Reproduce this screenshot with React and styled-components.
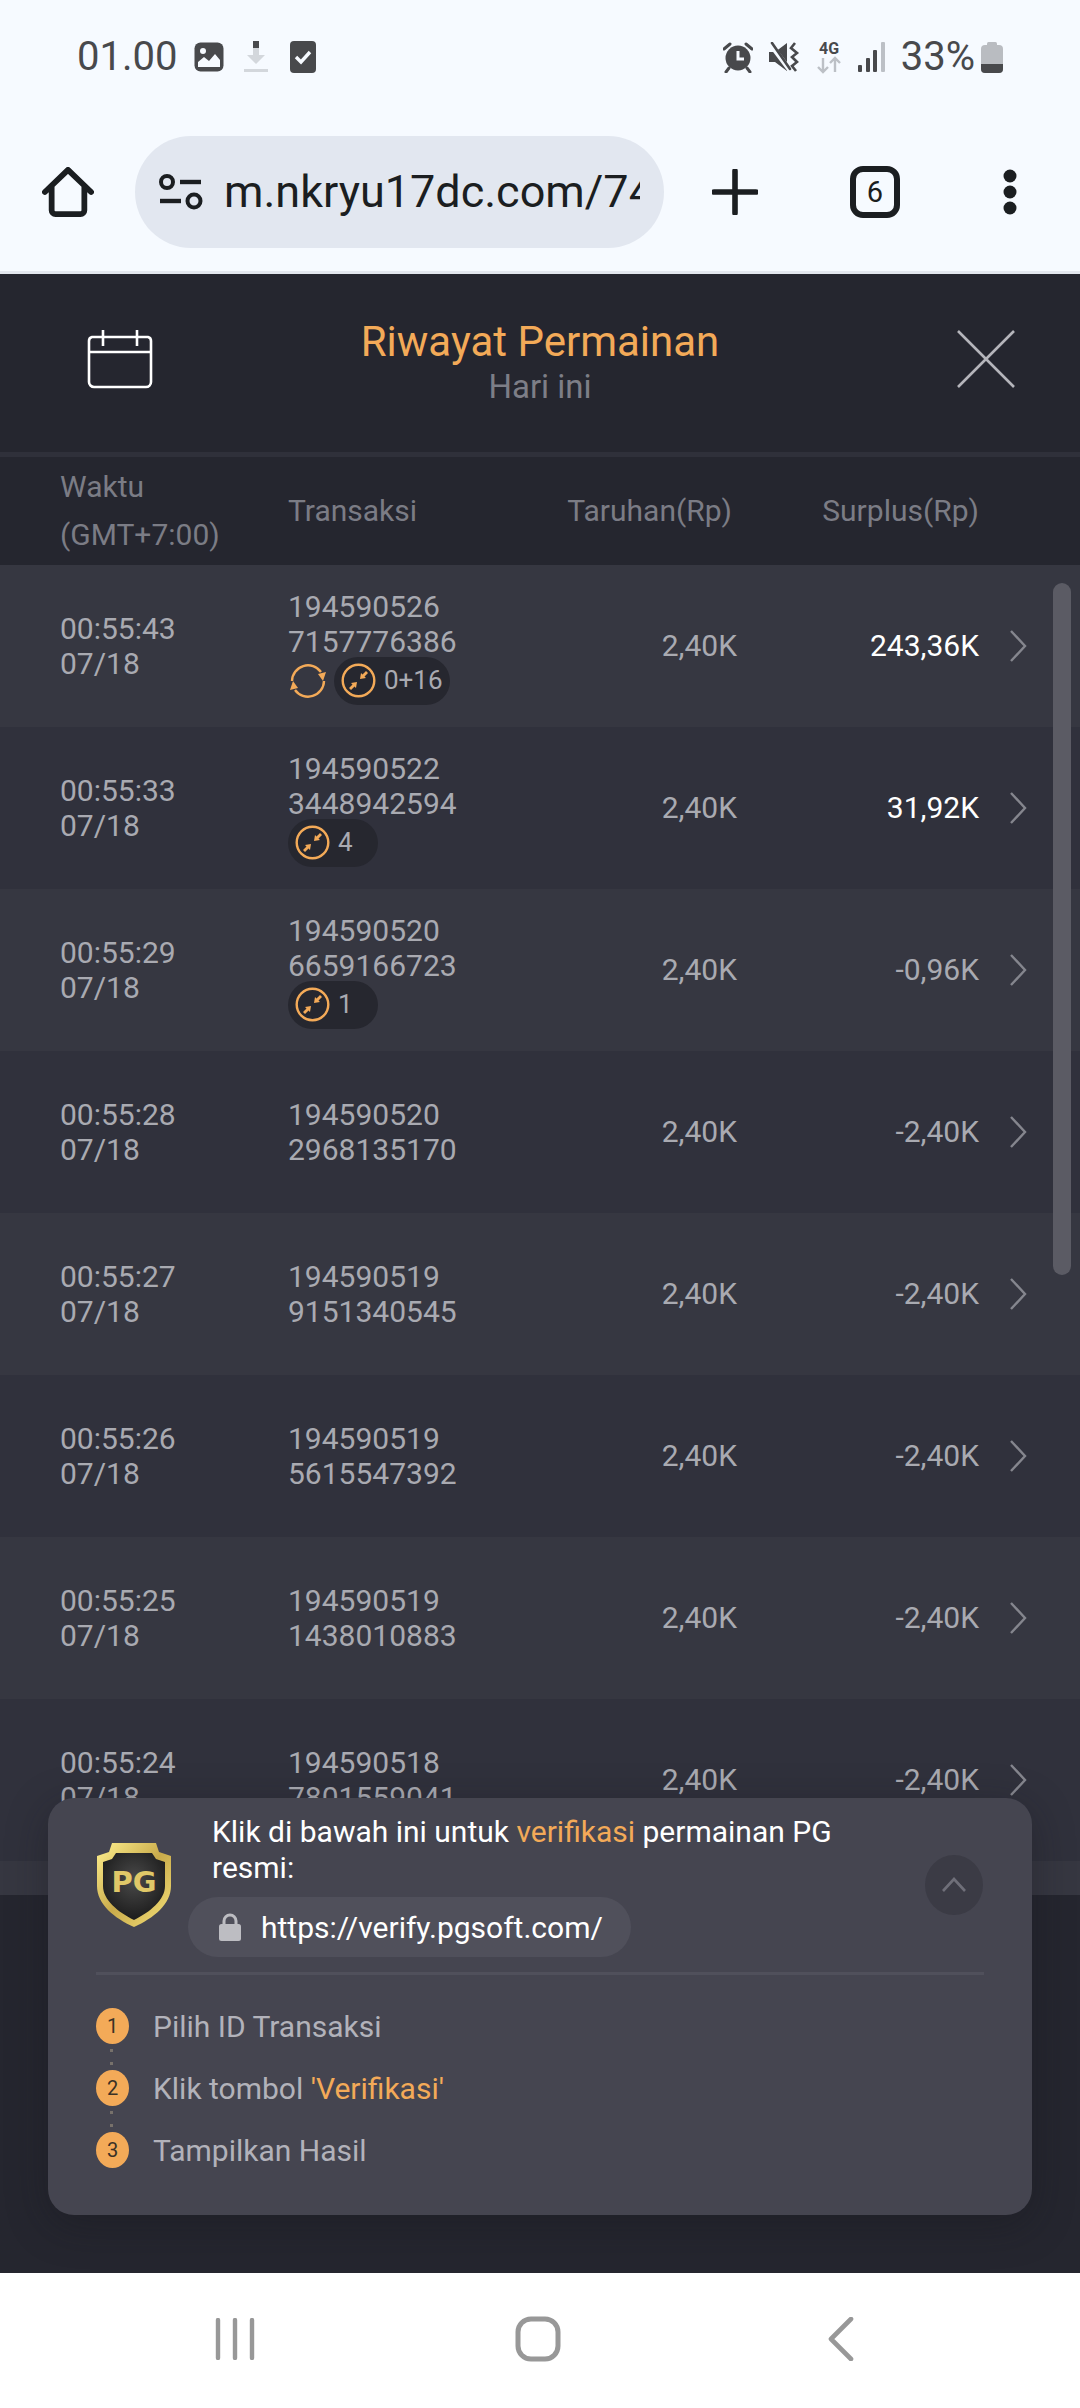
import React from 'react';
import styled, { createGlobalStyle } from 'styled-components';

const GlobalStyle = createGlobalStyle`
  html, body {
    margin: 0;
    padding: 0;
    background: #f6faff;
  }
  body {
    font-family: Roboto, "Noto Sans", sans-serif;
  }
  * {
    box-sizing: border-box;
  }
`;

const Phone = styled.div`
  width: 1080px;
  height: 2408px;
  display: flex;
  flex-direction: column;
  overflow: hidden;
`;

const StatusBar = styled.div`
  height: 112px;
  flex: none;
  background: #f6faff;
  padding: 2px 77px 0 77px;
  display: flex;
  align-items: center;
  justify-content: space-between;
  color: #48494c;
`;

const StatusGroup = styled.div`
  display: flex;
  align-items: center;
  gap: ${props => props.gap || 0}px;
`;

const StatusText = styled.span`
  font-size: 40px;
  line-height: 40px;
`;

const BrowserBar = styled.div`
  height: 162px;
  flex: none;
  background: #f6faff;
  border-bottom: 3px solid #e3e7ee;
  display: flex;
  align-items: center;
  padding: 0 0 0 42px;
  color: #1b1e21;
`;

const UrlPill = styled.div`
  width: 529px;
  height: 112px;
  margin-left: 41px;
  padding: 0 24px 0 24px;
  background: #e2e7f0;
  border-radius: 56px;
  display: flex;
  align-items: center;
  gap: 21px;
`;

const UrlText = styled.div`
  font-size: 45px;
  line-height: 60px;
  white-space: nowrap;
  overflow: hidden;
  flex: 1;
`;

const TabCount = styled.div`
  width: 50px;
  height: 52px;
  margin-left: 92px;
  border: 6px solid #1b1e21;
  border-radius: 13px;
  font-size: 29px;
  display: flex;
  align-items: center;
  justify-content: center;
`;

const BarAction = styled.div`
  margin-left: ${props => props.left}px;
  display: flex;
`;

const Panel = styled.div`
  flex: 1;
  min-height: 0;
  position: relative;
  overflow: hidden;
  background: #25262f;
`;

const PanelHeader = styled.div`
  height: 183px;
  border-bottom: 5px solid #2f303a;
  display: grid;
  grid-template-columns: 1fr auto 1fr;
  align-items: center;
  padding: 0 65px 8px 65px;
`;

const HeaderSide = styled.div`
  display: flex;
  justify-content: ${props => (props.end ? 'flex-end' : 'flex-start')};
  padding-left: ${props => (props.end ? 0 : 22)}px;
`;

const HeaderTitle = styled.div`
  text-align: center;
  padding-top: 5px;
`;

const Title = styled.div`
  color: #f3aa58;
  font-size: 42px;
  line-height: 50px;
`;

const Subtitle = styled.div`
  color: #7d7e87;
  font-size: 33px;
  line-height: 40px;
`;

const TableHead = styled.div`
  height: 108px;
  display: grid;
  align-items: center;
  color: #7b7c85;
  font-size: 30px;
  line-height: 48px;
  padding-left: 60px;
  grid-template-columns: 228px 264px 180px 247px 1fr;
`;

const HeadRight = styled.div`
  text-align: right;
`;

const Row = styled.div`
  height: 162px;
  display: grid;
  grid-template-columns: 228px 264px 185px 242px 1fr;
  align-items: center;
  padding-left: 60px;
  background: ${props => (props.odd ? '#363741' : '#30313c')};
  color: #a9aab1;
  font-size: 30px;
  line-height: 35.5px;
`;

const Surplus = styled.div`
  text-align: right;
  color: ${props => (props.win ? '#ffffff' : '#a9aab1')};
`;

const Chevron = styled.div`
  padding-left: 30px;
  display: flex;
`;

const Tags = styled.div`
  display: flex;
  align-items: center;
  gap: 6px;
  height: 46px;
  margin-top: -2px;
`;

const Spin = styled.div`
  width: 40px;
  display: flex;
  justify-content: center;
`;

const Tag = styled.div`
  height: 48px;
  min-width: 90px;
  padding: 0 7px 0 7px;
  border-radius: 24px;
  background: #26272f;
  display: flex;
  align-items: center;
  gap: 8px;
  font-size: 26px;
`;

const Footer = styled.div`
  height: 34px;
  background: #363741;
`;

const ScrollThumb = styled.div`
  position: absolute;
  top: 309px;
  right: 9px;
  width: 18px;
  height: 692px;
  border-radius: 9px;
  background: #5b5b64;
`;

const VerifyCard = styled.div`
  position: absolute;
  left: 48px;
  top: 1524px;
  width: 984px;
  height: 417px;
  padding: 16px 48px 0;
  border-radius: 26px;
  background: #454550;
  box-shadow: 0 10px 40px rgba(20, 20, 26, 0.35);
`;

const CardTop = styled.div`
  display: grid;
  grid-template-columns: 76px 1fr 58px;
  align-items: start;
  height: 158px;
`;

const CardLogo = styled.div`
  margin-top: 28px;
  display: flex;
`;

const CardBody = styled.div`
  padding-left: 40px;
`;

const CardText = styled.div`
  color: #ffffff;
  font-size: 30px;
  line-height: 36px;
  width: 660px;
`;

const Highlight = styled.span`
  color: #f3aa58;
`;

const VerifyLink = styled.div`
  width: 443px;
  height: 60px;
  margin: 11px 0 0 -24px;
  padding-left: 31px;
  border-radius: 30px;
  background: #50505b;
  display: flex;
  align-items: center;
  gap: 20px;
  color: #ffffff;
  font-size: 30px;
`;

const CollapseButton = styled.div`
  width: 58px;
  height: 60px;
  margin: 41px 1px 0 -1px;
  border-radius: 50%;
  background: #3b3b45;
  display: flex;
  align-items: center;
  justify-content: center;
`;

const CardDivider = styled.div`
  height: 3px;
  background: #50505b;
`;

const Steps = styled.div`
  margin-top: 33px;
  display: flex;
  flex-direction: column;
  gap: 26px;
`;

const Step = styled.div`
  display: flex;
  align-items: center;
  gap: 24px;
  height: 36px;
  color: #b2b2ba;
  font-size: 30px;
  position: relative;
`;

const StepNumber = styled.div`
  width: 33px;
  height: 36px;
  border-radius: 50%;
  background: #f3aa58;
  color: #3a3226;
  font-size: 20px;
  display: flex;
  align-items: center;
  justify-content: center;
`;

const StepDots = styled.div`
  position: absolute;
  left: 14px;
  top: 41px;
  width: 3px;
  height: 16px;
  border-top: 3px solid #77716b;
  border-bottom: 3px solid #77716b;
`;

const NavBar = styled.div`
  height: 135px;
  flex: none;
  background: #ffffff;
  display: flex;
  align-items: center;
  padding: 0 0 4px 215px;
`;

const NavSlot = styled.div`
  margin-left: ${props => props.left || 0}px;
  display: flex;
`;

const rows = [
  { time: '00:55:43', a: '194590526', b: '7157776386', bet: '2,40K', win: '243,36K', up: true, spin: true, tag: '0+16' },
  { time: '00:55:33', a: '194590522', b: '3448942594', bet: '2,40K', win: '31,92K', up: true, tag: '4' },
  { time: '00:55:29', a: '194590520', b: '6659166723', bet: '2,40K', win: '-0,96K', tag: '1' },
  { time: '00:55:28', a: '194590520', b: '2968135170', bet: '2,40K', win: '-2,40K' },
  { time: '00:55:27', a: '194590519', b: '9151340545', bet: '2,40K', win: '-2,40K' },
  { time: '00:55:26', a: '194590519', b: '5615547392', bet: '2,40K', win: '-2,40K' },
  { time: '00:55:25', a: '194590519', b: '1438010883', bet: '2,40K', win: '-2,40K' },
  { time: '00:55:24', a: '194590518', b: '7801559041', bet: '2,40K', win: '-2,40K' },
];

const ImageIcon = () => (
  <svg width="30" height="30" viewBox="0 0 30 30">
    <rect x="0.5" y="0.5" width="29" height="29" rx="6" fill="#48494c" />
    <circle cx="9" cy="9" r="3" fill="#f6faff" />
    <path d="M4 25 V20 L10 15 L15 19 L21 12 L26 18 V25 Z" fill="#f6faff" />
  </svg>
);

const DownloadIcon = () => (
  <svg width="24" height="32" viewBox="0 0 24 32">
    <rect x="9" y="0" width="6" height="7" fill="#48494c" />
    <path d="M9 7 H15 V14 H21 L12 23 L3 14 H9 Z" fill="#d3d7dc" />
    <rect x="0" y="28" width="24" height="3" fill="#d3d7dc" />
  </svg>
);

const CheckIcon = () => (
  <svg width="26" height="32" viewBox="0 0 26 32">
    <rect width="26" height="32" rx="4" fill="#48494c" />
    <path d="M6 16 L11 21 L20 11" fill="none" stroke="#f6faff" strokeWidth="3.4" />
  </svg>
);

const AlarmIcon = () => (
  <svg width="30" height="31" viewBox="0 0 30 31">
    <circle cx="15" cy="16" r="12.5" fill="#48494c" />
    <path d="M15 9 V17 H21" fill="none" stroke="#f6faff" strokeWidth="3" />
    <path d="M1 7 L7 2 M29 7 L23 2" stroke="#48494c" strokeWidth="3" strokeLinecap="round" />
    <path d="M6 26 L3 30 M24 26 L27 30" stroke="#48494c" strokeWidth="3" strokeLinecap="round" />
  </svg>
);

const MuteIcon = () => (
  <svg width="31" height="30" viewBox="0 0 31 30">
    <path d="M0 10 H6 L18 1 V29 L6 20 H0 Z" fill="#48494c" />
    <path d="M2 3 L20 27" stroke="#f6faff" strokeWidth="5" />
    <path d="M3 1 L21 27" stroke="#48494c" strokeWidth="2.6" strokeLinecap="round" />
    <path d="M26 1 L22 6 L28 11 L23 15 L28 20 L23 24 L27 29" fill="none" stroke="#48494c" strokeWidth="2.6" />
  </svg>
);

const NetworkIcon = () => (
  <svg width="26" height="34" viewBox="0 0 26 34">
    <text x="13" y="14" textAnchor="middle" fontFamily="Roboto, sans-serif" fontSize="16" fontWeight="700" fill="#48494c">4G</text>
    <path d="M7 18 V32 M2 27 L7 32 L12 27" fill="none" stroke="#bcc0c6" strokeWidth="2.4" />
    <path d="M19 32 V18 M14 23 L19 18 L24 23" fill="none" stroke="#bcc0c6" strokeWidth="2.4" />
  </svg>
);

const SignalIcon = () => (
  <svg width="27" height="30" viewBox="0 0 27 30">
    <rect x="0" y="23" width="4" height="7" rx="1" fill="#48494c" />
    <rect x="8" y="16" width="4" height="14" rx="1" fill="#48494c" />
    <rect x="15" y="8" width="4" height="22" rx="1" fill="#48494c" />
    <rect x="23" y="0" width="4" height="30" rx="1" fill="#bcc0c6" />
  </svg>
);

const BatteryIcon = () => (
  <svg width="22" height="31" viewBox="0 0 22 31">
    <rect x="6" y="0" width="10" height="5" rx="1.5" fill="#b9bcc1" />
    <rect x="0" y="3" width="22" height="28" rx="4" fill="#b9bcc1" />
    <path d="M0 22 H22 V27 A4 4 0 0 1 18 31 H4 A4 4 0 0 1 0 27 Z" fill="#48494c" />
  </svg>
);

const HomeIcon = () => (
  <svg width="52" height="50" viewBox="0 0 54 52">
    <path d="M3 26 L27 3 L51 26 M10 20 V45 A4 4 0 0 0 14 49 H40 A4 4 0 0 0 44 45 V20" fill="none" stroke="#1b1e21" strokeWidth="6" strokeLinecap="round" strokeLinejoin="round" />
  </svg>
);

const TuneIcon = () => (
  <svg width="44" height="36" viewBox="0 0 44 36">
    <circle cx="8" cy="8" r="6" fill="none" stroke="#1b1e21" strokeWidth="4" />
    <path d="M21 8 H42" stroke="#1b1e21" strokeWidth="4.4" />
    <path d="M1 27 H22" stroke="#1b1e21" strokeWidth="4.4" />
    <circle cx="35" cy="27" r="6.5" fill="none" stroke="#1b1e21" strokeWidth="4" />
  </svg>
);

const PlusIcon = () => (
  <svg width="46" height="46" viewBox="0 0 46 46">
    <path d="M23 2 V44 M2 23 H44" stroke="#1b1e21" strokeWidth="5.6" strokeLinecap="round" />
  </svg>
);

const MenuIcon = () => (
  <svg width="14" height="46" viewBox="0 0 14 46">
    <circle cx="7" cy="7" r="6.5" fill="#1b1e21" />
    <circle cx="7" cy="23" r="6.5" fill="#1b1e21" />
    <circle cx="7" cy="39" r="6.5" fill="#1b1e21" />
  </svg>
);

const CalendarIcon = () => (
  <svg width="66" height="60" viewBox="0 0 66 60">
    <path d="M5 8 H61 A4 4 0 0 1 64 12 V53 A5 5 0 0 1 59 58 H7 A5 5 0 0 1 2 53 V12 A4 4 0 0 1 5 8 Z" fill="none" stroke="#ffffff" strokeWidth="2.6" />
    <path d="M2 23 H64" stroke="#ffffff" strokeWidth="2.6" />
    <path d="M16 1 V17 M50 1 V17" stroke="#ffffff" strokeWidth="2.6" />
  </svg>
);

const CloseIcon = () => (
  <svg width="58" height="58" viewBox="0 0 58 58">
    <path d="M1 1 L57 57 M57 1 L1 57" stroke="#b5b5bb" strokeWidth="2.6" />
  </svg>
);

const RowChevron = () => (
  <svg width="18" height="34" viewBox="0 0 18 34">
    <path d="M2 2 L16 17 L2 32" fill="none" stroke="#85868e" strokeWidth="2.4" />
  </svg>
);

const SpinIcon = () => (
  <svg width="36" height="36" viewBox="0 0 36 36">
    <path d="M2 18 A16 16 0 0 1 31 9" fill="none" stroke="#f3aa58" strokeWidth="2.4" />
    <path d="M34 18 A16 16 0 0 1 5 27" fill="none" stroke="#f3aa58" strokeWidth="2.4" />
    <path d="M28 11 L36 9 L33 18 Z" fill="#f3aa58" />
    <path d="M8 25 L0 27 L3 18 Z" fill="#f3aa58" />
  </svg>
);

const ScatterIcon = () => (
  <svg width="35" height="35" viewBox="0 0 35 35">
    <circle cx="17.5" cy="17.5" r="15.8" fill="none" stroke="#f3aa58" strokeWidth="2.4" />
    <path d="M19 16 L20 10 L21.5 11.5 L25 8 L27 10 L23.5 13.5 L25 15 Z" fill="#f3aa58" />
    <path d="M16 19 L15 25 L13.5 23.5 L10 27 L8 25 L11.5 21.5 L10 20 Z" fill="#f3aa58" />
  </svg>
);

const PgShield = () => (
  <svg width="76" height="86" viewBox="0 0 76 86">
    <defs>
      <linearGradient id="rim" x1="0" y1="0" x2="1" y2="1">
        <stop offset="0" stopColor="#fff08f" />
        <stop offset="0.5" stopColor="#c9ab4b" />
        <stop offset="1" stopColor="#f6e27a" />
      </linearGradient>
      <radialGradient id="core" cx="0.5" cy="0.4" r="0.7">
        <stop offset="0" stopColor="#4a4a4a" />
        <stop offset="1" stopColor="#141414" />
      </radialGradient>
    </defs>
    <path d="M16 1 H60 L63 10 L75 14 V44 C75 62 58 76 38 85 C18 76 1 62 1 44 V14 L13 10 Z" fill="url(#rim)" />
    <path d="M20 11 H56 L60 17 L69 20 V44 C69 58 54 70 38 78 C22 70 7 58 7 44 V20 L16 17 Z" fill="url(#core)" />
    <text x="38" y="50" textAnchor="middle" fontFamily="'DejaVu Sans', sans-serif" fontSize="29" fontWeight="700" fill="#e0c868">PG</text>
  </svg>
);

const LockIcon = () => (
  <svg width="22" height="28" viewBox="0 0 22 28">
    <path d="M5 13 V8 A6 6 0 0 1 17 8 V13" fill="none" stroke="#bdbdc2" strokeWidth="3" />
    <rect x="0" y="11" width="22" height="17" rx="2.5" fill="#bdbdc2" />
  </svg>
);

const CollapseChevron = () => (
  <svg width="26" height="16" viewBox="0 0 26 16">
    <path d="M2 14 L13 2 L24 14" fill="none" stroke="#6f6f79" strokeWidth="2.6" />
  </svg>
);

const RecentsIcon = () => (
  <svg width="40" height="42" viewBox="0 0 40 42">
    <path d="M3 2 V40 M20 2 V40 M37 2 V40" stroke="#989898" strokeWidth="4.4" strokeLinecap="round" />
  </svg>
);

const HomeNavIcon = () => (
  <svg width="46" height="46" viewBox="0 0 46 46">
    <rect x="3" y="3" width="40" height="40" rx="13" fill="none" stroke="#989898" strokeWidth="5" />
  </svg>
);

const BackIcon = () => (
  <svg width="26" height="44" viewBox="0 0 26 44">
    <path d="M23 2 L3 22 L23 42" fill="none" stroke="#989898" strokeWidth="4.6" strokeLinecap="round" strokeLinejoin="round" />
  </svg>
);

export default function App() {
  return (
    <Phone>
      <GlobalStyle />
      <StatusBar>
        <StatusGroup>
          <StatusText>01.00</StatusText>
          <BarAction left={17}>
            <ImageIcon />
          </BarAction>
          <BarAction left={20}>
            <DownloadIcon />
          </BarAction>
          <BarAction left={22}>
            <CheckIcon />
          </BarAction>
        </StatusGroup>
        <StatusGroup gap={16}>
          <AlarmIcon />
          <MuteIcon />
          <NetworkIcon />
          <SignalIcon />
          <StatusGroup gap={6}>
            <StatusText>33%</StatusText>
            <BatteryIcon />
          </StatusGroup>
        </StatusGroup>
      </StatusBar>
      <BrowserBar>
        <HomeIcon />
        <UrlPill>
          <TuneIcon />
          <UrlText>m.nkryu17dc.com/74</UrlText>
        </UrlPill>
        <BarAction left={48}>
          <PlusIcon />
        </BarAction>
        <TabCount>6</TabCount>
        <BarAction left={103}>
          <MenuIcon />
        </BarAction>
      </BrowserBar>
      <Panel>
        <PanelHeader>
          <HeaderSide>
            <CalendarIcon />
          </HeaderSide>
          <HeaderTitle>
            <Title>Riwayat Permainan</Title>
            <Subtitle>Hari ini</Subtitle>
          </HeaderTitle>
          <HeaderSide end="true">
            <CloseIcon />
          </HeaderSide>
        </PanelHeader>
        <TableHead>
          <div>
            Waktu
            <br />
            (GMT+7:00)
          </div>
          <div>Transaksi</div>
          <HeadRight>Taruhan(Rp)</HeadRight>
          <HeadRight>Surplus(Rp)</HeadRight>
        </TableHead>
        {rows.map((row, index) => (
          <Row key={row.b} odd={index % 2 === 0}>
            <div>
              {row.time}
              <br />
              07/18
            </div>
            <div>
              {row.a}
              <br />
              {row.b}
              {row.tag && (
                <Tags>
                  {row.spin && (
                    <Spin>
                      <SpinIcon />
                    </Spin>
                  )}
                  <Tag>
                    <ScatterIcon />
                    {row.tag}
                  </Tag>
                </Tags>
              )}
            </div>
            <HeadRight>{row.bet}</HeadRight>
            <Surplus win={row.up}>{row.win}</Surplus>
            <Chevron>
              <RowChevron />
            </Chevron>
          </Row>
        ))}
        <Footer />
        <ScrollThumb />
        <VerifyCard>
          <CardTop>
            <CardLogo>
              <PgShield />
            </CardLogo>
            <CardBody>
              <CardText>
                Klik di bawah ini untuk <Highlight>verifikasi</Highlight> permainan PG resmi:
              </CardText>
              <VerifyLink>
                <LockIcon />
                https://verify.pgsoft.com/
              </VerifyLink>
            </CardBody>
            <CollapseButton>
              <CollapseChevron />
            </CollapseButton>
          </CardTop>
          <CardDivider />
          <Steps>
            <Step>
              <StepNumber>1</StepNumber>
              Pilih ID Transaksi
              <StepDots />
            </Step>
            <Step>
              <StepNumber>2</StepNumber>
              <span>
                Klik tombol <Highlight>'Verifikasi'</Highlight>
              </span>
              <StepDots />
            </Step>
            <Step>
              <StepNumber>3</StepNumber>
              Tampilkan Hasil
            </Step>
          </Steps>
        </VerifyCard>
      </Panel>
      <NavBar>
        <RecentsIcon />
        <NavSlot left={260}>
          <HomeNavIcon />
        </NavSlot>
        <NavSlot left={267}>
          <BackIcon />
        </NavSlot>
      </NavBar>
    </Phone>
  );
}
